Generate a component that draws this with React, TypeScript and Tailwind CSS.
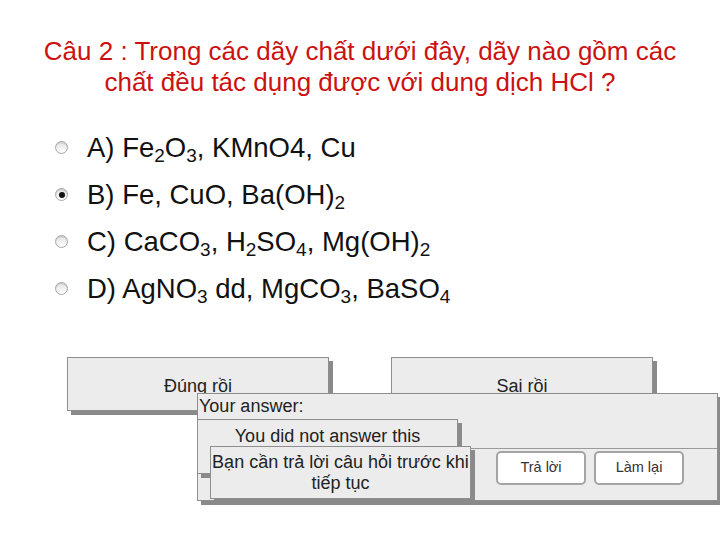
import type { ReactNode } from "react";

const font = { fontFamily: '"Liberation Sans", Arial, sans-serif' };

function Radio({ checked }: { checked?: boolean }) {
  return (
    <span className="flex h-[13px] w-[13px] shrink-0 items-center justify-center rounded-full border border-[#a8a8a8] bg-gradient-to-b from-[#e2e2e2] to-white shadow-[inset_0_1px_1px_rgba(0,0,0,0.15)]">
      {checked && <span className="h-[6px] w-[6px] rounded-full bg-[#111]" />}
    </span>
  );
}

function Sub({ children }: { children: ReactNode }) {
  return <sub className="relative top-[5px] align-baseline text-[19px]">{children}</sub>;
}

const options: { label: ReactNode; checked?: boolean }[] = [
  {
    label: (
      <>
        A) Fe<Sub>2</Sub>O<Sub>3</Sub>, KMnO4, Cu
      </>
    ),
  },
  {
    label: (
      <>
        B) Fe, CuO, Ba(OH)<Sub>2</Sub>
      </>
    ),
    checked: true,
  },
  {
    label: (
      <>
        C) CaCO<Sub>3</Sub>, H<Sub>2</Sub>SO<Sub>4</Sub>, Mg(OH)<Sub>2</Sub>
      </>
    ),
  },
  {
    label: (
      <>
        D) AgNO<Sub>3</Sub> dd, MgCO<Sub>3</Sub>, BaSO<Sub>4</Sub>
      </>
    ),
  },
];

const panel =
  "absolute border border-[#8e8e8e] bg-[#ececec] shadow-[4px_4px_0_#8a8a8a] text-[18px] text-[#222]";

export default function App() {
  return (
    <div className="h-[540px] w-[720px] overflow-hidden bg-white" style={font}>
      <h1 className="pt-[36px] text-center text-[26px] font-normal leading-[31px] text-[#cc1111]">
        Câu 2 : Trong các dãy chất dưới đây, dãy nào gồm các
        <br />
        chất đều tác dụng được với dung dịch HCl ?
      </h1>

      <div className="mt-[26px] flex flex-col pl-[55px]">
        {options.map((o, i) => (
          <div key={i} className="flex h-[47px] items-center gap-[19px] text-[27.5px] text-[#111]">
            <Radio checked={o.checked} />
            <span className="leading-none">{o.label}</span>
          </div>
        ))}
      </div>

      <div className="relative mt-[45px] h-[150px]">
        <div className={`${panel} left-[67px] top-0 h-[54px] w-[262px] pt-[17px] text-center leading-[22px]`}>
          Đúng rồi
        </div>
        <div className={`${panel} left-[391px] top-0 h-[54px] w-[262px] pt-[17px] text-center leading-[22px]`}>
          Sai rồi
        </div>

        <div className={`${panel} left-[197px] top-[36px] flex h-[108px] w-[521px] flex-col`}>
          <div className="h-[54px] pl-[1px] pt-[1px] leading-[22px]">Your answer:</div>
          <div className="flex flex-1 items-start gap-[8px] border-t border-[#9a9a9a] pl-[298px] pt-[2px]">
            <button className="h-[34px] w-[90px] rounded-[5px] border-2 border-[#a4a4a4] bg-white text-[14.5px] text-[#333]">
              Trả lời
            </button>
            <button className="h-[34px] w-[90px] rounded-[5px] border-2 border-[#a4a4a4] bg-white text-[14.5px] text-[#333]">
              Làm lại
            </button>
          </div>
        </div>

        <div className={`${panel} left-[197px] top-[62px] h-[55px] w-[261px] pt-[5px] text-center leading-[22px]`}>
          You did not answer this
        </div>

        <div className={`${panel} left-[210px] top-[89px] h-[53px] w-[261px] pt-[5px] text-center leading-[21px]`}>
          Bạn cần trả lời câu hỏi trước khi
          <br />
          tiếp tục
        </div>
      </div>
    </div>
  );
}
